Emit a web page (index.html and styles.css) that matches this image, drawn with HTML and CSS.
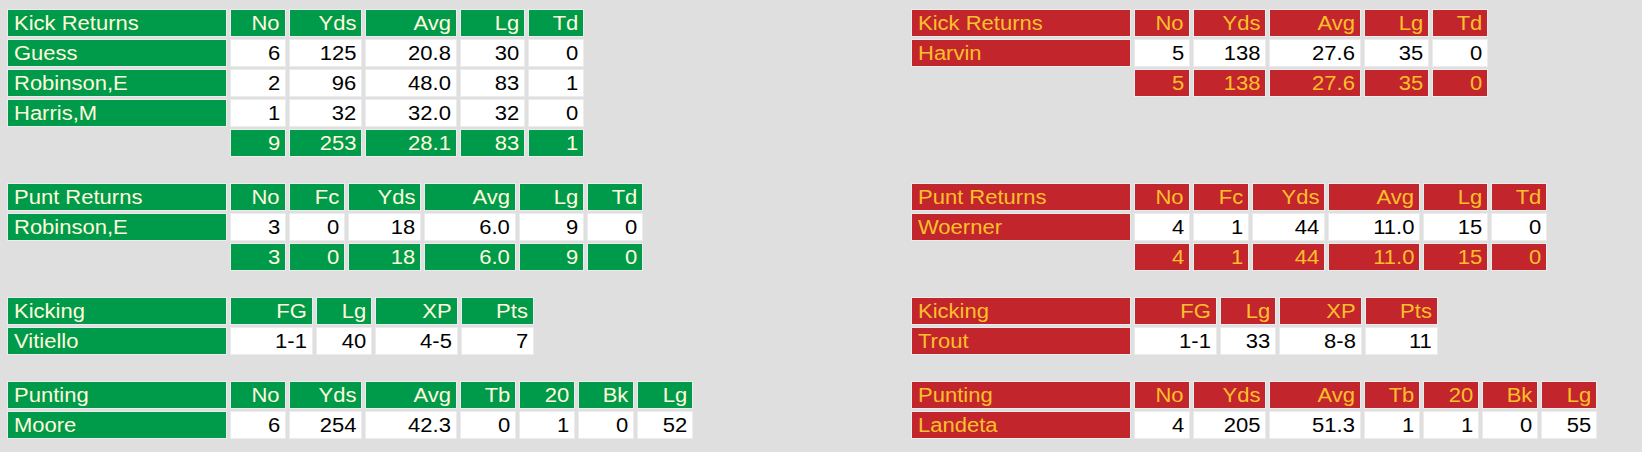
FILE: index.html
```html
<!DOCTYPE html>
<html lang="en">
<head>
<meta charset="utf-8">
<title>Returns and Kicking</title>
<link rel="stylesheet" href="styles.css">
</head>
<body>
<div class="board">
  <!-- Kick returns -->
  <table class="stats home">
    <tr><th class="c name w220"><span class="t">Kick Returns</span></th><th class="c w56"><span class="t">No</span></th><th class="c w73"><span class="t">Yds</span></th><th class="c w92"><span class="t">Avg</span></th><th class="c w65"><span class="t">Lg</span></th><th class="c w56"><span class="t">Td</span></th></tr>
    <tr><td class="c name"><span class="t">Guess</span></td><td class="v"><span class="t">6</span></td><td class="v"><span class="t">125</span></td><td class="v"><span class="t">20.8</span></td><td class="v"><span class="t">30</span></td><td class="v"><span class="t">0</span></td></tr>
    <tr><td class="c name"><span class="t">Robinson,E</span></td><td class="v"><span class="t">2</span></td><td class="v"><span class="t">96</span></td><td class="v"><span class="t">48.0</span></td><td class="v"><span class="t">83</span></td><td class="v"><span class="t">1</span></td></tr>
    <tr><td class="c name"><span class="t">Harris,M</span></td><td class="v"><span class="t">1</span></td><td class="v"><span class="t">32</span></td><td class="v"><span class="t">32.0</span></td><td class="v"><span class="t">32</span></td><td class="v"><span class="t">0</span></td></tr>
    <tr><td class="blank"></td><td class="c"><span class="t">9</span></td><td class="c"><span class="t">253</span></td><td class="c"><span class="t">28.1</span></td><td class="c"><span class="t">83</span></td><td class="c"><span class="t">1</span></td></tr>
  </table>
  <table class="stats away">
    <tr><th class="c name w220"><span class="t">Kick Returns</span></th><th class="c w56"><span class="t">No</span></th><th class="c w73"><span class="t">Yds</span></th><th class="c w92"><span class="t">Avg</span></th><th class="c w65"><span class="t">Lg</span></th><th class="c w56"><span class="t">Td</span></th></tr>
    <tr><td class="c name"><span class="t">Harvin</span></td><td class="v"><span class="t">5</span></td><td class="v"><span class="t">138</span></td><td class="v"><span class="t">27.6</span></td><td class="v"><span class="t">35</span></td><td class="v"><span class="t">0</span></td></tr>
    <tr><td class="blank"></td><td class="c"><span class="t">5</span></td><td class="c"><span class="t">138</span></td><td class="c"><span class="t">27.6</span></td><td class="c"><span class="t">35</span></td><td class="c"><span class="t">0</span></td></tr>
  </table>

  <!-- Punt returns -->
  <table class="stats home">
    <tr><th class="c name w220"><span class="t">Punt Returns</span></th><th class="c w56"><span class="t">No</span></th><th class="c w56"><span class="t">Fc</span></th><th class="c w73"><span class="t">Yds</span></th><th class="c w92"><span class="t">Avg</span></th><th class="c w65"><span class="t">Lg</span></th><th class="c w56"><span class="t">Td</span></th></tr>
    <tr><td class="c name"><span class="t">Robinson,E</span></td><td class="v"><span class="t">3</span></td><td class="v"><span class="t">0</span></td><td class="v"><span class="t">18</span></td><td class="v"><span class="t">6.0</span></td><td class="v"><span class="t">9</span></td><td class="v"><span class="t">0</span></td></tr>
    <tr><td class="blank"></td><td class="c"><span class="t">3</span></td><td class="c"><span class="t">0</span></td><td class="c"><span class="t">18</span></td><td class="c"><span class="t">6.0</span></td><td class="c"><span class="t">9</span></td><td class="c"><span class="t">0</span></td></tr>
  </table>
  <table class="stats away">
    <tr><th class="c name w220"><span class="t">Punt Returns</span></th><th class="c w56"><span class="t">No</span></th><th class="c w56"><span class="t">Fc</span></th><th class="c w73"><span class="t">Yds</span></th><th class="c w92"><span class="t">Avg</span></th><th class="c w65"><span class="t">Lg</span></th><th class="c w56"><span class="t">Td</span></th></tr>
    <tr><td class="c name"><span class="t">Woerner</span></td><td class="v"><span class="t">4</span></td><td class="v"><span class="t">1</span></td><td class="v"><span class="t">44</span></td><td class="v"><span class="t">11.0</span></td><td class="v"><span class="t">15</span></td><td class="v"><span class="t">0</span></td></tr>
    <tr><td class="blank"></td><td class="c"><span class="t">4</span></td><td class="c"><span class="t">1</span></td><td class="c"><span class="t">44</span></td><td class="c"><span class="t">11.0</span></td><td class="c"><span class="t">15</span></td><td class="c"><span class="t">0</span></td></tr>
  </table>

  <!-- Kicking -->
  <table class="stats home">
    <tr><th class="c name w220"><span class="t">Kicking</span></th><th class="c w83"><span class="t">FG</span></th><th class="c w56"><span class="t">Lg</span></th><th class="c w83"><span class="t">XP</span></th><th class="c w73"><span class="t">Pts</span></th></tr>
    <tr><td class="c name"><span class="t">Vitiello</span></td><td class="v"><span class="t">1-1</span></td><td class="v"><span class="t">40</span></td><td class="v"><span class="t">4-5</span></td><td class="v"><span class="t">7</span></td></tr>
  </table>
  <table class="stats away">
    <tr><th class="c name w220"><span class="t">Kicking</span></th><th class="c w83"><span class="t">FG</span></th><th class="c w56"><span class="t">Lg</span></th><th class="c w83"><span class="t">XP</span></th><th class="c w73"><span class="t">Pts</span></th></tr>
    <tr><td class="c name"><span class="t">Trout</span></td><td class="v"><span class="t">1-1</span></td><td class="v"><span class="t">33</span></td><td class="v"><span class="t">8-8</span></td><td class="v"><span class="t">11</span></td></tr>
  </table>

  <!-- Punting -->
  <table class="stats home">
    <tr><th class="c name w220"><span class="t">Punting</span></th><th class="c w56"><span class="t">No</span></th><th class="c w73"><span class="t">Yds</span></th><th class="c w92"><span class="t">Avg</span></th><th class="c w56"><span class="t">Tb</span></th><th class="c w56"><span class="t">20</span></th><th class="c w56"><span class="t">Bk</span></th><th class="c w56"><span class="t">Lg</span></th></tr>
    <tr><td class="c name"><span class="t">Moore</span></td><td class="v"><span class="t">6</span></td><td class="v"><span class="t">254</span></td><td class="v"><span class="t">42.3</span></td><td class="v"><span class="t">0</span></td><td class="v"><span class="t">1</span></td><td class="v"><span class="t">0</span></td><td class="v"><span class="t">52</span></td></tr>
  </table>
  <table class="stats away">
    <tr><th class="c name w220"><span class="t">Punting</span></th><th class="c w56"><span class="t">No</span></th><th class="c w73"><span class="t">Yds</span></th><th class="c w92"><span class="t">Avg</span></th><th class="c w56"><span class="t">Tb</span></th><th class="c w56"><span class="t">20</span></th><th class="c w56"><span class="t">Bk</span></th><th class="c w56"><span class="t">Lg</span></th></tr>
    <tr><td class="c name"><span class="t">Landeta</span></td><td class="v"><span class="t">4</span></td><td class="v"><span class="t">205</span></td><td class="v"><span class="t">51.3</span></td><td class="v"><span class="t">1</span></td><td class="v"><span class="t">1</span></td><td class="v"><span class="t">0</span></td><td class="v"><span class="t">55</span></td></tr>
  </table>
</div>
</body>
</html>
```

FILE: styles.css
```css
html, body {
  margin: 0;
  padding: 0;
}

body {
  background: #dfdfdf;
  font-family: "Liberation Sans", Arial, sans-serif;
}

.board {
  display: grid;
  grid-template-columns: 904px auto;
  row-gap: 22px;
  align-items: start;
  justify-items: start;
  padding: 7px 0 0 4px;
}

.stats {
  border-collapse: separate;
  border-spacing: 3px 2px;
}

.stats th,
.stats td {
  box-sizing: border-box;
  height: 28px;
  padding: 0 5px 0 6px;
  border: 1px solid #ececec;
  font-size: 20px;
  font-weight: normal;
  line-height: 26px;
  text-align: right;
  white-space: nowrap;
  vertical-align: middle;
}

.stats .name {
  text-align: left;
}

.t {
  display: inline-block;
  transform: scaleX(1.1);
  transform-origin: right center;
}

.name .t {
  transform-origin: left center;
}

.w220 { width: 220px; }
.w92 { width: 92px; }
.w83 { width: 83px; }
.w73 { width: 73px; }
.w65 { width: 65px; }
.w56 { width: 56px; }

.home .c {
  background: #009a4b;
  color: #fffbdc;
}

.away .c {
  background: #c3252d;
  color: #fcc02a;
}

.stats .v {
  background: #ffffff;
  color: #000000;
}

.stats .blank {
  border: none;
  background: none;
}
```
